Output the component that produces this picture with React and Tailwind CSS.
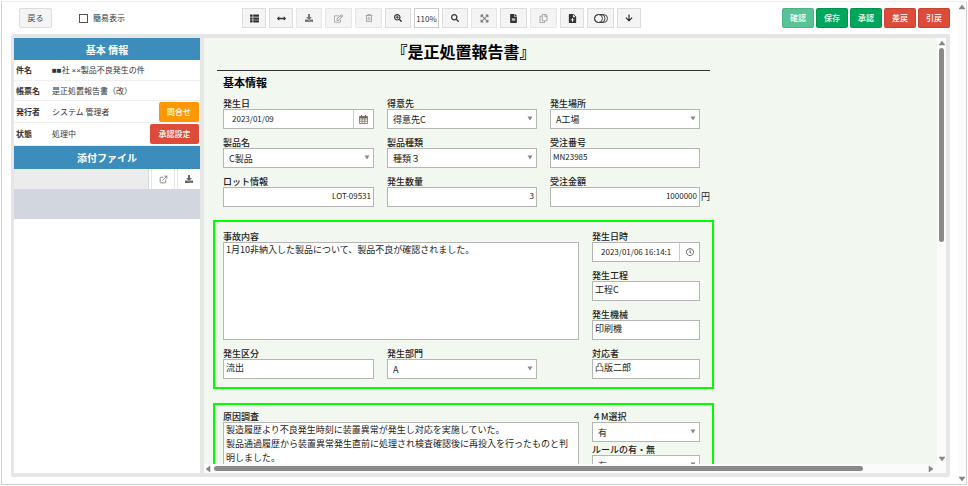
import React, { useId } from "react";
import { FaThList, FaArrowsAltH, FaDownload, FaRegEdit, FaRegTrashAlt, FaSearchPlus, FaSearch, FaFileAlt, FaRegCopy, FaArrowDown, FaRegClock, FaExpandArrowsAlt } from "react-icons/fa";
import { MdNoteAdd } from "react-icons/md";
import { FiExternalLink } from "react-icons/fi";

const ToggleIcon = () => (
  <svg width="14" height="9" viewBox="0 0 14 9" fill="none" stroke="#444" strokeWidth="1">
    <rect x="0.5" y="0.5" width="13" height="8" rx="4" />
    <circle cx="4.5" cy="4.5" r="4" />
    <path d="M7 0.5a4 4 0 0 1 0 8" />
  </svg>
);

const CalendarIcon = () => (
  <svg width="9" height="9" viewBox="0 0 9 9" fill="none" stroke="#6b6255" strokeWidth="0.7">
    <path d="M0.5 1.5H8.5V8.5H0.5ZM0.5 4H8.5M0.5 6.2H8.5M3.2 3V8.5M5.8 3V8.5" />
    <path d="M0.5 2.4H8.5" strokeWidth="1.5" />
    <path d="M2.5 0V2M6.5 0V2" strokeWidth="1.2" />
  </svg>
);

const toolsBefore = [
  { label: "一覧", icon: <FaThList size={9} />, width: "w-6" },
  { label: "幅", icon: <FaArrowsAltH size={9} />, width: "w-6" },
  { label: "ダウンロード", icon: <FaDownload size={8} />, width: "w-[26px]", muted: true },
  { label: "編集", icon: <FaRegEdit size={9} />, width: "w-[27px]", disabled: true },
  { label: "削除", icon: <FaRegTrashAlt size={8} />, width: "w-[27px]", disabled: true },
  { label: "拡大", icon: <FaSearchPlus size={8} />, width: "w-[26px]" },
];

const toolsAfter = [
  { label: "縮小", icon: <FaSearch size={8} />, width: "w-[26px]" },
  { label: "全体", icon: <FaExpandArrowsAlt size={9} />, width: "w-[26px]", muted: true },
  { label: "文書", icon: <FaFileAlt size={9} />, width: "w-[27px]" },
  { label: "複写", icon: <FaRegCopy size={9} />, width: "w-[27px]", disabled: true },
  { label: "追加", icon: <MdNoteAdd size={11} />, width: "w-6" },
  { label: "切替", icon: <ToggleIcon />, width: "w-[27px]" },
  { label: "下へ", icon: <FaArrowDown size={8} />, width: "w-6" },
];

const actions = [
  { label: "確認", color: "bg-[#59c395]" },
  { label: "保存", color: "bg-[#00a65a]" },
  { label: "承認", color: "bg-[#00a65a]" },
  { label: "差戻", color: "bg-[#dd4b39]" },
  { label: "引戻", color: "bg-[#dd4b39]" },
];

const ToolButton = ({ label, icon, width, muted, disabled }) => (
  <button
    aria-label={label}
    disabled={disabled}
    className={`${width} h-5 flex items-center justify-center bg-[#f4f4f4] border ${
      disabled ? "border-[#e6e6e6] text-[#999]" : muted ? "border-[#e6e6e6] text-[#777]" : "border-[#ddd] text-[#333]"
    }`}
  >
    {icon}
  </button>
);

const Arrow = ({ dir }) => {
  const paths = {
    up: "M3 1L6 5H0Z",
    down: "M3 5L0 1H6Z",
    left: "M1 3L5 0V6Z",
    right: "M5 3L1 0V6Z",
  };
  return (
    <svg className="shrink-0" width="6" height="6" viewBox="0 0 6 6" fill="#858585" stroke="#858585" strokeWidth="0.5">
      <path d={paths[dir]} />
    </svg>
  );
};

const boxStyle = "block w-full h-5 bg-white border border-[#b5b5b5] outline-none text-[#222]";

const Field = ({ label, children }) => {
  const id = useId();
  return (
    <div className="min-w-0">
      <label htmlFor={id} className="block h-3 leading-[14px] font-medium whitespace-nowrap">{label}</label>
      {children(id)}
    </div>
  );
};

const TextField = ({ label, value, className = "" }) => (
  <Field label={label}>
    {(id) => <input id={id} defaultValue={value} className={`${boxStyle} px-0.5 pb-1 ${className}`} />}
  </Field>
);

const IconField = ({ label, value, icon }) => (
  <Field label={label}>
    {(id) => (
      <div className={`${boxStyle} flex`}>
        <input id={id} defaultValue={value} className="flex-1 min-w-0 pl-2 text-[8px] outline-none" />
        <button aria-label={`${label}を選択`} className="w-5 flex items-center justify-center border-l border-[#ccc] text-[#555]">
          {icon}
        </button>
      </div>
    )}
  </Field>
);

const SelectField = ({ label, value }) => (
  <Field label={label}>
    {(id) => (
      <div className="relative">
        <select id={id} defaultValue={value} className={`${boxStyle} appearance-none pl-[5px] pt-0.5`}>
          <option>{value}</option>
        </select>
        <svg className="absolute right-1 top-[7px] pointer-events-none" width="6" height="5" viewBox="0 0 6 5" fill="#888">
          <path d="M0.5 0.5H5.5L3 4.5Z" />
        </svg>
      </div>
    )}
  </Field>
);

const AreaField = ({ label, value, height }) => (
  <Field label={label}>
    {(id) => (
      <textarea
        id={id}
        defaultValue={value}
        className={`block w-full ${height} px-0.5 bg-white border border-[#b5b5b5] outline-none resize-none overflow-hidden leading-[14px] text-[#222]`}
      />
    )}
  </Field>
);

const Toolbar = () => (
  <header className="flex h-5 shrink-0 mb-1.5 pl-2 text-[8px]">
    <div className="w-[223px] shrink-0 flex items-center">
      <button className="w-[33px] h-5 bg-[#f4f4f4] border border-[#ddd] rounded-xs text-[#444]">戻る</button>
      <label className="flex items-center ml-[27px] text-[#333]">
        <input type="checkbox" className="appearance-none size-[9px] mr-[5px] border border-[#555] bg-white" />
        簡易表示
      </label>
    </div>
    <div className="flex gap-[3px]">
      {toolsBefore.map((tool) => <ToolButton key={tool.label} {...tool} />)}
      <input aria-label="表示倍率" defaultValue="110%" className="w-[25px] h-5 border border-[#ccc] text-center text-[#333] outline-none" />
      {toolsAfter.map((tool) => <ToolButton key={tool.label} {...tool} />)}
    </div>
    <div className="flex gap-0.5 ml-auto">
      {actions.map((action) => (
        <button key={action.label} className={`w-8 h-5 rounded-xs border border-black/10 font-medium text-white ${action.color}`}>
          {action.label}
        </button>
      ))}
    </div>
  </header>
);

const SideRow = ({ title, value, height, children }) => (
  <div className={`flex items-center ${height} border-b border-[#f0f0f0] pl-0.5 pr-px`}>
    <dt className="w-9 font-bold">{title}</dt>
    <dd className="flex-1 flex items-center justify-between whitespace-nowrap">
      <span>{value}</span>
      {children}
    </dd>
  </div>
);

// symbols are drawn at latin width, not as full-width glyphs
const Subject = () => (
  <>
    <span className="font-['Liberation_Sans']">■■</span>社 <span className="font-['Liberation_Sans']">××</span>製品不良発生の件
  </>
);

const Sidebar = () => (
  <aside className="w-[186px] shrink-0 bg-white text-[8px] text-[#333]">
    <h2 className="h-[22px] flex items-center justify-center bg-[#3c8dbc] text-[10px] font-bold text-white">基本 情報</h2>
    <dl>
      <SideRow title="件名" value={<Subject />} height="h-[21px]" />
      <SideRow title="帳票名" value="是正処置報告書（改）" height="h-5" />
      <SideRow title="発行者" value="システム 管理者" height="h-[22px]">
        <button className="w-10 h-5 rounded-xs bg-[#ff9800] font-medium text-white">問合せ</button>
      </SideRow>
      <SideRow title="状態" value="処理中" height="h-[23px]">
        <button className="w-[49px] h-5 rounded-xs bg-[#dd4b39] font-medium text-white">承認設定</button>
      </SideRow>
    </dl>
    <h2 className="h-[23px] flex items-center justify-center bg-[#3c8dbc] text-[10px] font-bold text-white">添付ファイル</h2>
    <div className="flex h-5 text-[#666]">
      <div className="flex-1 bg-[#ececec] border-r border-[#d2d6de]"></div>
      <button aria-label="開く" className="w-6 ml-0.5 flex items-center justify-center border-x border-[#e5e5e5]">
        <FiExternalLink size={9} />
      </button>
      <button aria-label="ダウンロード" className="w-[23px] ml-0.5 flex items-center justify-center border-l border-[#e5e5e5]">
        <FaDownload size={8} />
      </button>
    </div>
    <div className="h-[30px] bg-[#d2d6de]"></div>
  </aside>
);

const Report = () => (
  <div className="w-[501px] ml-[9px] pt-[3px]">
    <h1 className="mx-1 text-center text-base leading-5 font-bold text-black">『是正処置報告書』</h1>
    <hr className="mt-[9px] mx-1 border-[#333]" />

    <section className="pl-2 text-[9px]">
      <h2 className="ml-0.5 mt-[3px] mb-[7px] text-[11px] leading-4 font-bold text-black">基本情報</h2>
      <div className="ml-0.5 grid grid-cols-[151px_150px_150px] gap-x-[13px] gap-y-[7px]">
        <IconField label="発生日" value="2023/01/09" icon={<CalendarIcon />} />
        <SelectField label="得意先" value="得意先C" />
        <SelectField label="発生場所" value="A工場" />
        <SelectField label="製品名" value="C製品" />
        <SelectField label="製品種類" value="種類３" />
        <TextField label="受注番号" value="MN23985" className="text-[8px]" />
        <TextField label="ロット情報" value="LOT-09531" className="text-right text-[8px]" />
        <TextField label="発生数量" value="3" className="text-right text-[8px]" />
        <Field label="受注金額">
          {(id) => (
            <div className="flex items-center">
              <input id={id} defaultValue="1000000" className={`${boxStyle} shrink-0 px-0.5 pb-1 text-right text-[8px]`} />
              <span className="pl-px">円</span>
            </div>
          )}
        </Field>
      </div>
    </section>

    <section className="flex gap-[13px] mt-[13px] border-2 border-[#00ff00] p-2 pr-3 text-[9px]">
      <div className="flex-1 grid gap-[7px]">
        <AreaField
          label="事故内容"
          value="1月10非納入した製品について、製品不良が確認されました。"
          height="h-[98px]"
        />
        <div className="grid grid-cols-[151px_150px] gap-[13px]">
          <TextField label="発生区分" value="流出" />
          <SelectField label="発生部門" value="A" />
        </div>
      </div>
      <div className="w-[108px] grid gap-[7px]">
        <IconField label="発生日時" value="2023/01/06 16:14:1" icon={<FaRegClock size={8} />} />
        <TextField label="発生工程" value="工程C" />
        <TextField label="発生機械" value="印刷機" />
        <TextField label="対応者" value="凸版二郎" />
      </div>
    </section>

    <section className="flex gap-[13px] mt-3.5 border-2 border-[#00ff00] pt-[5px] pb-2 pl-2 pr-3 text-[9px]">
      <div className="flex-1">
        <AreaField
          label="原因調査"
          value={"製造履歴より不良発生時刻に装置異常が発生し対応を実施していた。\n製品通過履歴から装置異常発生直前に処理され検査確認後に再投入を行ったものと判\n明しました。"}
          height="h-[98px]"
        />
      </div>
      <div className="w-[108px] flex flex-col gap-px">
        <SelectField label="４M選択" value="有" />
        <SelectField label="ルールの有・無" value="有" />
      </div>
    </section>
  </div>
);

const App = () => {
  return (
    <div className="h-screen p-px bg-white font-['Noto_Sans_CJK_JP',sans-serif] text-[#222]">
      <div className="h-full flex border border-[#d0d0d0] border-t-[#eee]">
        <div className="flex-1 min-w-0 flex flex-col pt-1.5 pb-[7px] pl-[9px] pr-2">
          <Toolbar />
          <div className="flex-1 min-h-0 flex border-4 border-l-[3px] border-[#e6e6e6] rounded-xs">
            <Sidebar />
            <main className="flex-1 min-w-0 flex flex-col border-l-4 border-[#e6e6e6] bg-[#fbfbfb]">
              <div className="flex-1 min-h-0 flex">
                <div className="flex-1 min-w-0 overflow-hidden bg-[#f2f7f0]">
                  <Report />
                </div>
                <div className="w-[9px] flex flex-col items-center py-0.5">
                  <Arrow dir="up" />
                  <div className="w-[5px] h-[46%] mt-0.5 rounded-full bg-[#8a8a8a]"></div>
                  <div className="mt-auto flex"><Arrow dir="down" /></div>
                </div>
              </div>
              <div className="h-[9px] shrink-0 flex items-center pl-px pr-3">
                <Arrow dir="left" />
                <div className="w-[89%] h-[5px] ml-[3px] rounded-full bg-[#8a8a8a]"></div>
                <div className="ml-auto flex"><Arrow dir="right" /></div>
              </div>
            </main>
          </div>
        </div>
        <div className="w-2 shrink-0 flex flex-col items-center justify-between py-0.5 bg-[#fbfbfb]">
          <Arrow dir="up" />
          <Arrow dir="down" />
        </div>
      </div>
    </div>
  );
};

export default App;
